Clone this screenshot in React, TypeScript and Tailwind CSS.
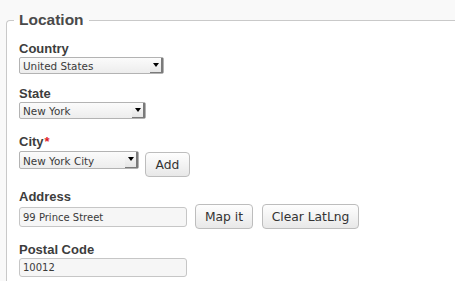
import type { ReactNode } from "react";

const Label = ({ children, className = "" }: { children: ReactNode; className?: string }) => (
    <div className={`text-[13px] font-bold leading-[15px] text-[#3d3d3d] ${className}`}>{children}</div>
);

const Select = ({ value, className = "" }: { value: string; className?: string }) => (
    <div
        className={`flex items-stretch rounded-[2px] border border-[#b3b3b3] bg-gradient-to-b from-[#fbfbfb] to-[#ededed] font-['DejaVu_Sans',sans-serif] text-[10.4px] text-[#3a3a3a] ${className}`}
    >
        <div className="flex flex-1 items-center pl-[3px] pt-[2px] leading-none">{value}</div>
        <div className="flex w-[13px] items-center justify-center border-r-2 border-b border-[#7a7a7a] bg-gradient-to-b from-[#fdfdfd] to-[#e6e6e6] pb-[1px]">
            <div className="h-0 w-0 border-x-[3px] border-t-[4px] border-x-transparent border-t-black" />
        </div>
    </div>
);

const Input = ({ value, className = "" }: { value: string; className?: string }) => (
    <div
        className={`flex items-center rounded-[3px] border border-[#c6c6c6] bg-[#f6f6f6] pl-[3px] pt-[1px] font-['DejaVu_Sans',sans-serif] text-[10px] leading-none text-[#3a3a3a] ${className}`}
    >
        {value}
    </div>
);

const Button = ({ children, className = "" }: { children: ReactNode; className?: string }) => (
    <button
        className={`flex h-[25px] items-center justify-center rounded-[4px] border border-[#bdbdbd] bg-gradient-to-b from-[#fefefe] to-[#e8e8e8] pt-[1px] font-['DejaVu_Sans',sans-serif] text-[12.3px] leading-none text-[#333] ${className}`}
    >
        {children}
    </button>
);

export default function App() {
    return (
        <div className="min-h-[281px] w-[455px] overflow-hidden bg-[#f9f9f9] pt-[12px] font-['Liberation_Sans',Arial,sans-serif]">
            <fieldset className="ml-[6px] min-h-[269px] rounded-tl-[4px] border-t border-l border-[#c9c9c9] bg-white pl-[12px]">
                <legend className="-ml-[5px] px-[5px] text-[15.5px] font-bold leading-[16px] text-[#4a4a4a]">
                    Location
                </legend>

                <Label className="mt-[13px]">Country</Label>
                <Select value="United States" className="mt-[1px] h-[17px] w-[145px]" />

                <Label className="mt-[12px]">State</Label>
                <Select value="New York" className="mt-[1px] h-[17px] w-[127px]" />

                <Label className="mt-[15px]">
                    City<span className="ml-[1px] text-[#e0201f]">*</span>
                </Label>
                <div className="flex items-start">
                    <Select value="New York City" className="mt-[2px] h-[18px] w-[120px]" />
                    <Button className="ml-[6px] mt-[3px] w-[45px]">Add</Button>
                </div>

                <Label className="mt-[12px]">Address</Label>
                <div className="flex items-start">
                    <Input value="99 Prince Street" className="mt-[3px] h-[20px] w-[168px]" />
                    <Button className="ml-[8px] w-[58px]">Map it</Button>
                    <Button className="ml-[9px] w-[97px]">Clear LatLng</Button>
                </div>

                <Label className="mt-[13px]">Postal Code</Label>
                <Input value="10012" className="mt-[1px] h-[19px] w-[168px]" />
            </fieldset>
        </div>
    );
}
